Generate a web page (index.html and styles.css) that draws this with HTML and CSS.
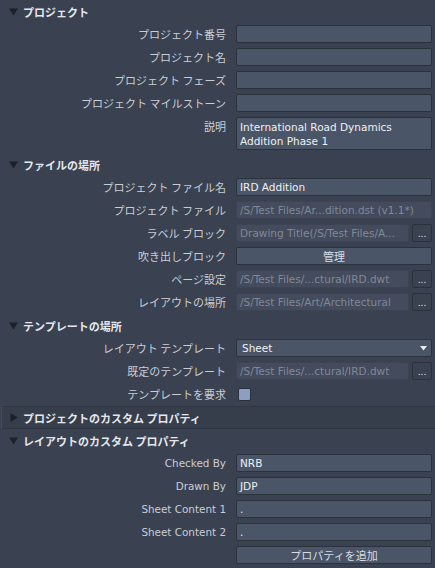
FILE: index.html
```html
<!DOCTYPE html>
<html lang="ja">
<head>
<meta charset="utf-8">
<link rel="stylesheet" href="styles.css">
</head>
<body>
<div class="panel">
  <div class="head"><svg class="tri" width="9" height="8" viewBox="0 0 9 8"><path d="M0 0.5H9L4.5 7.5Z"/></svg><span>プロジェクト</span></div>
  <div class="rows">
    <div class="lbl">プロジェクト番号</div><div class="field edit"></div>
    <div class="lbl">プロジェクト名</div><div class="field edit"></div>
    <div class="lbl">プロジェクト フェーズ</div><div class="field edit"></div>
    <div class="lbl">プロジェクト マイルストーン</div><div class="field edit"></div>
    <div class="lbl">説明</div><div class="field edit area">International Road Dynamics<br>Addition Phase 1</div>
  </div>

  <div class="head"><svg class="tri" width="9" height="8" viewBox="0 0 9 8"><path d="M0 0.5H9L4.5 7.5Z"/></svg><span>ファイルの場所</span></div>
  <div class="rows">
    <div class="lbl">プロジェクト ファイル名</div><div class="field edit">IRD Addition</div>
    <div class="lbl">プロジェクト ファイル</div><div class="field dis">/S/Test Files/Ar...dition.dst (v1.1*)</div>
    <div class="lbl">ラベル ブロック</div><div class="grp"><div class="field dis">Drawing Title(/S/Test Files/A...</div><div class="dots">...</div></div>
    <div class="lbl">吹き出しブロック</div><div class="field btn">管理</div>
    <div class="lbl">ページ設定</div><div class="grp"><div class="field dis">/S/Test Files/...ctural/IRD.dwt</div><div class="dots">...</div></div>
    <div class="lbl">レイアウトの場所</div><div class="grp"><div class="field dis">/S/Test Files/Art/Architectural</div><div class="dots">...</div></div>
  </div>

  <div class="head"><svg class="tri" width="9" height="8" viewBox="0 0 9 8"><path d="M0 0.5H9L4.5 7.5Z"/></svg><span>テンプレートの場所</span></div>
  <div class="rows">
    <div class="lbl">レイアウト テンプレート</div><div class="field edit select"><span class="sel">Sheet</span><svg class="arrow" width="7" height="5" viewBox="0 0 7 5"><path d="M0 0H7L3.5 4.5Z"/></svg></div>
    <div class="lbl">既定のテンプレート</div><div class="grp"><div class="field dis">/S/Test Files/...ctural/IRD.dwt</div><div class="dots">...</div></div>
    <div class="lbl">テンプレートを要求</div><div class="chkcell"><div class="chk"></div></div>
  </div>

  <div class="head closed"><svg class="tri" width="8" height="9" viewBox="0 0 8 9"><path d="M0.5 0V9L7.5 4.5Z"/></svg><span>プロジェクトのカスタム プロパティ</span></div>

  <div class="head"><svg class="tri" width="9" height="8" viewBox="0 0 9 8"><path d="M0 0.5H9L4.5 7.5Z"/></svg><span>レイアウトのカスタム プロパティ</span></div>
  <div class="rows">
    <div class="lbl latin">Checked By</div><div class="field edit">NRB</div>
    <div class="lbl latin">Drawn By</div><div class="field edit">JDP</div>
    <div class="lbl latin">Sheet Content 1</div><div class="field edit">.</div>
    <div class="lbl latin">Sheet Content 2</div><div class="field edit">.</div>
    <div class="lbl"></div><div class="field btn">プロパティを追加</div>
  </div>
</div>
</body>
</html>
```

FILE: styles.css
```css
html, body {
  margin: 0;
  padding: 0;
  background: #3a4150;
}
body {
  width: 435px;
  height: 568px;
  overflow: hidden;
  font-family: "Noto Sans CJK JP", "DejaVu Sans", sans-serif;
  font-size: 11px;
  color: #c9cdd5;
}
.panel {
  display: flex;
  flex-direction: column;
}
.head {
  height: 23px;
  box-sizing: border-box;
  display: flex;
  align-items: center;
  padding-left: 9px;
  gap: 5px;
  font-weight: bold;
  color: #e4e7ec;
  font-size: 11px;
}
.head .tri {
  fill: #1c212b;
  flex: none;
}
.head.closed {
  background: #363d4b;
  border-top: 1px solid #2f3541;
  border-bottom: 1px solid #2f3541;
  border-left: 1px solid #454c5a;
  margin-left: 1px;
  padding-left: 8px;
}
.rows {
  display: grid;
  grid-template-columns: 226px 1fr;
  column-gap: 10px;
  row-gap: 5px;
  padding: 2px 3px 3px 0;
}
.lbl {
  text-align: right;
  line-height: 18px;
  height: 18px;
  white-space: nowrap;
  color: #c9cdd5;
}
.lbl.latin {
  font-family: "DejaVu Sans", sans-serif;
  font-size: 10.4px;
}
.field {
  height: 18px;
  box-sizing: border-box;
  border-radius: 2px;
  padding: 0 3px;
  line-height: 16px;
  font-family: "DejaVu Sans", "Noto Sans CJK JP", sans-serif;
  font-size: 10.5px;
  white-space: nowrap;
  overflow: hidden;
}
.edit {
  background: #4b5568;
  border: 1px solid #2a323c;
  color: #eef0f3;
}
.area {
  height: 33px;
  line-height: 14px;
  padding: 2px 3px 1px;
}
.dis {
  background: #434b5c;
  border: 1px solid #3c4453;
  color: #808999;
  flex: 1;
  min-width: 0;
}
.grp {
  display: flex;
  gap: 3px;
}
.dots {
  width: 20px;
  height: 18px;
  box-sizing: border-box;
  background: #3a4250;
  border: 1px solid #2a313c;
  border-radius: 2px;
  color: #e8eaee;
  font-family: "DejaVu Sans", sans-serif;
  font-size: 9px;
  line-height: 19px;
  text-align: center;
  flex: none;
}
.btn {
  background: #4b5568;
  border: 1px solid #2a323c;
  color: #d8dce3;
  text-align: center;
  font-family: "Noto Sans CJK JP", sans-serif;
  font-size: 11px;
}
.select {
  display: flex;
  align-items: center;
  justify-content: space-between;
  padding: 0 4px 0 5px;
}
.select .arrow {
  fill: #e8eaee;
  flex: none;
}
.chkcell {
  height: 18px;
  display: flex;
  align-items: center;
  padding-left: 2px;
}
.chk {
  width: 13px;
  height: 13px;
  box-sizing: border-box;
  background: #8e9ec2;
  border: 1px solid #2a313c;
  border-radius: 2px;
}
```
